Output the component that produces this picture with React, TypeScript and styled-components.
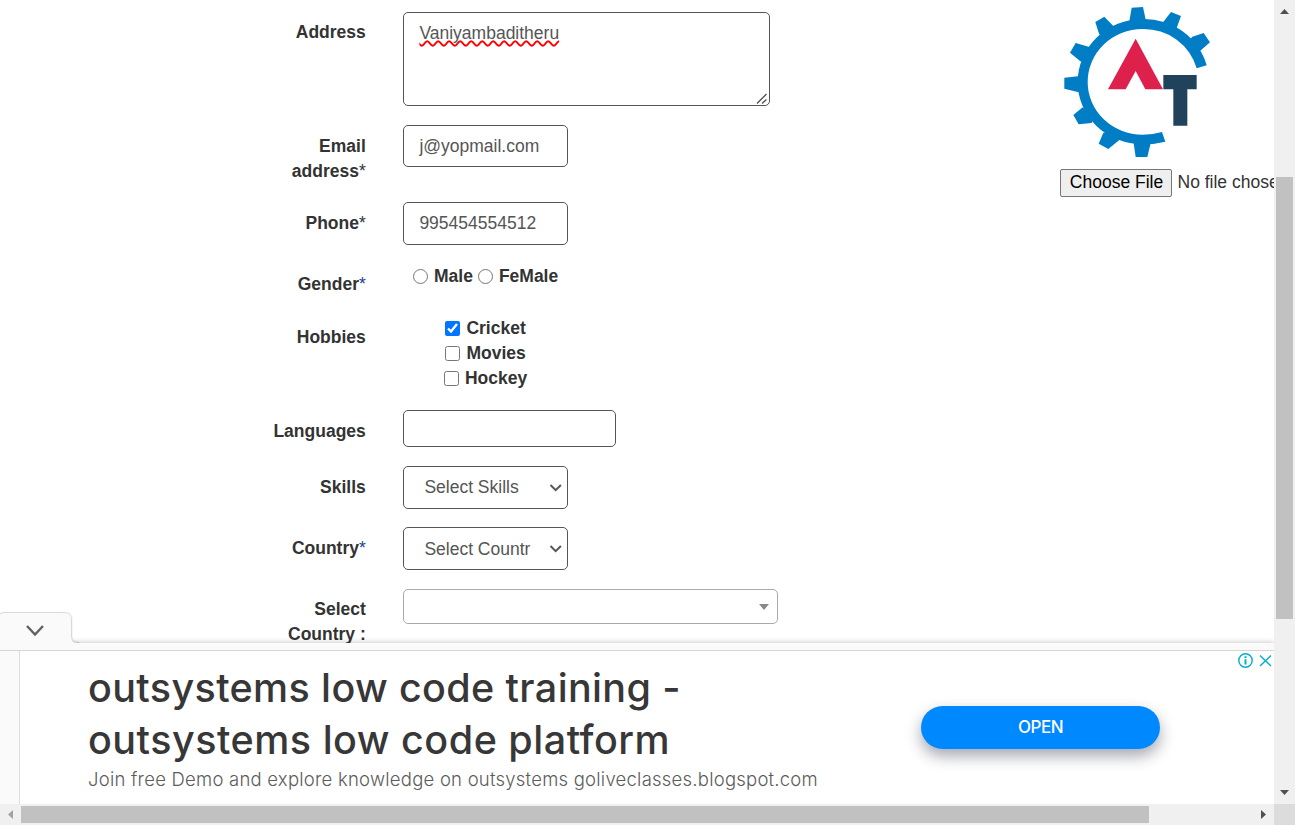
import React from "react";
import styled, { createGlobalStyle } from "styled-components";

const GlobalStyle = createGlobalStyle`
  *, *::before, *::after { box-sizing: border-box; }
  body {
    margin: 0;
    background: #fff;
    font-family: "Liberation Sans", Arial, sans-serif;
    font-size: 17.5px;
    line-height: 25px;
    color: #333;
    overflow: hidden;
  }
`;

const Window = styled.div`
  display: grid;
  grid-template-columns: 1274px 21px;
  grid-template-rows: 804px 21px;
  width: 1295px;
  height: 825px;
  overflow: hidden;
`;

const Viewport = styled.div`
  position: relative;
  display: flex;
  justify-content: space-between;
  overflow: hidden;
  background: #fff;
`;

const Form = styled.form`
  display: grid;
  grid-template-columns: 365.8px auto;
  grid-template-rows: 113px 77px 61px 53px 94px 56px 61px 62px 60px;
  column-gap: 37.2px;
  align-content: start;
  align-items: start;
  padding-top: 12px;
`;

const Label = styled.label<{ $top?: number }>`
  padding: ${(p) => p.$top ?? 9}px 0 0 254px;
  font-weight: bold;
  text-align: right;
`;

const Star = styled.span<{ $blue?: boolean }>`
  font-weight: normal;
  color: ${(p) => (p.$blue ? "#1d3f8f" : "#333")};
`;

const Field = styled.div<{ $w: number; $h: number; $light?: boolean; $indent?: number }>`
  display: flex;
  align-items: center;
  justify-content: space-between;
  width: ${(p) => p.$w}px;
  height: ${(p) => p.$h}px;
  padding: 0 5px 0 ${(p) => p.$indent ?? 15.4}px;
  border: 1px solid ${(p) => (p.$light ? "#aaa" : "#555")};
  border-radius: 5px;
  background: #fff;
  color: #555;
  white-space: nowrap;
`;

const TextArea = styled(Field)`
  align-items: flex-start;
  padding: 8px 1px 0 15.4px;
`;

const Misspelled = styled.span`
  text-decoration: underline wavy #f00 1.5px;
  text-decoration-skip-ink: none;
  text-underline-offset: 0.5px;
`;

const Grip = styled.svg`
  align-self: flex-end;
`;

const Clip = styled.span<{ $drop?: boolean }>`
  width: 107px;
  padding-top: ${(p) => (p.$drop ? 2 : 0)}px;
  overflow: hidden;
`;

const Caret = styled.svg`
  margin-right: 2px;
`;

const Radios = styled.div`
  display: flex;
  align-items: center;
  height: 27px;
  padding-left: 10px;
  font-weight: bold;
`;

const Checks = styled.div`
  display: flex;
  flex-direction: column;
  align-items: flex-start;
  padding-left: 41px;
  font-weight: bold;
`;

const Option = styled.label<{ $shift?: number }>`
  display: flex;
  align-items: center;
  height: 25px;
  margin-left: ${(p) => p.$shift ?? 0}px;
`;

const Toggle = styled.input<{ $gap: number }>`
  width: 15px;
  height: 15px;
  margin: 0 ${(p) => p.$gap}px 1px 0;
`;

const Aside = styled.aside`
  width: 214px;
  flex: none;
`;

const Logo = styled.svg`
  display: block;
`;

const FilePicker = styled.div`
  display: flex;
  align-items: center;
  gap: 5.5px;
  margin-top: 9px;
  white-space: nowrap;
`;

const FileButton = styled.button`
  width: 112px;
  height: 28px;
  flex: none;
  padding: 0 0 2px 1px;
  border: 1px solid #767676;
  border-radius: 2px;
  background: #efefef;
  color: #000;
  font: inherit;
`;

const FileName = styled.span`
  padding-bottom: 2px;
`;

const AdHost = styled.div`
  position: absolute;
  left: 0;
  right: 0;
  bottom: 0;
  height: 196px;
  overflow: hidden;
`;

const AdPanel = styled.section`
  position: absolute;
  left: 0;
  right: 0;
  bottom: 0;
  height: 161px;
  padding-top: 7px;
  background: #fafafa;
  box-shadow: 0 -1px 5px rgba(0, 0, 0, 0.2);
`;

const AdTab = styled.div`
  position: absolute;
  left: -8px;
  bottom: 154px;
`;

const TabShape = styled.svg`
  display: block;
`;

const AdBody = styled.div`
  display: flex;
  height: 154px;
  padding-left: 19px;
  border-top: 1px solid #d5d5d5;
`;

const AdCard = styled.div`
  position: relative;
  display: flex;
  flex: 1;
  justify-content: space-between;
  padding: 11px 114px 0 68px;
  border-left: 1px solid #ddd;
  background: #fff;
  font-family: Inter, sans-serif;
`;

const AdTitle = styled.h2`
  margin: 0;
  font-size: 39.5px;
  font-weight: 450;
  line-height: 52px;
  letter-spacing: 0.36px;
  color: #373737;
  white-space: nowrap;
`;

const AdTitleLine = styled.span<{ $spacing: number }>`
  display: block;
  letter-spacing: ${(p) => p.$spacing}px;
`;

const AdText = styled.p`
  margin: 1px 0 0;
  font-size: 18.5px;
  font-weight: 300;
  line-height: 25px;
  letter-spacing: 0.23px;
  color: #5c5c5c;
  white-space: nowrap;
`;

const OpenButton = styled.button`
  width: 239px;
  height: 43px;
  margin-top: 44px;
  border: 0;
  border-radius: 22px;
  background: #0088ff;
  box-shadow: 0 7px 15px rgba(30, 35, 60, 0.4);
  color: #fff;
  font: 500 17px/25px Inter, sans-serif;
  letter-spacing: -0.5px;
`;

const AdMarks = styled.svg`
  position: absolute;
  top: 1px;
  right: 1px;
`;

const VTrack = styled.div`
  display: flex;
  flex-direction: column;
  justify-content: space-between;
  align-items: center;
  background: #f0f0f0;
`;

const VThumb = styled.div`
  width: 17px;
  height: 442px;
  margin-top: 156px;
  background: #c1c1c1;
`;

const Spacer = styled.div`
  flex: 1;
`;

const HTrack = styled.div`
  display: flex;
  justify-content: space-between;
  align-items: center;
  background: #f0f0f0;
`;

const HThumb = styled.div`
  width: 1128px;
  height: 17px;
  margin-right: 104px;
  background: #c1c1c1;
`;

const Corner = styled.div`
  background: #dcdcdc;
`;

const TrackArrow = styled.svg`
  flex: none;
`;

const Chevron = () => (
  <svg width="13" height="9" viewBox="0 0 13 9">
    <path d="M1.5 2L6.7 7.2L11.9 2" fill="none" stroke="#555" strokeWidth="2" />
  </svg>
);

const ring =
  "M440 205L470 196A195 189 0 0 0 278 57A195 190 0 0 0 83 247A195 186 0 0 0 278 433Q315 433 346 425" +
  "L336 396Q310 404 278 404A165 158 0 0 1 113 246A165 159 0 0 1 278 87A165 159 0 0 1 440 205Z";

const teeth = [
  "245,23 279,21 288,64 278,75 237,70",
  "363,36 393,48 380,84 360,88 338,68",
  "461,99 480,127 451,152 430,160 410,130 427,110",
  "136,66 163,50 190,78 180,95 148,104",
  "77,129 60,158 93,185 110,180 118,141",
  "43,233 43,266 86,277 100,250 84,229",
  "70,345 86,373 125,369 130,350 98,322",
  "160,398 146,431 175,447 208,420 195,395",
  "251,430 257,471 292,471 302,430 275,420",
];

const Ad = () => (
  <AdHost>
    <AdPanel>
      <AdBody>
        <AdCard>
          <div>
            <AdTitle>
              <AdTitleLine $spacing={0.36}>outsystems low code training -</AdTitleLine>
              <AdTitleLine $spacing={0.5}>outsystems low code platform</AdTitleLine>
            </AdTitle>
            <AdText>Join free Demo and explore knowledge on outsystems goliveclasses.blogspot.com</AdText>
          </div>
          <OpenButton type="button">OPEN</OpenButton>
          <AdMarks width="36" height="17" viewBox="0 0 36 17">
            <g fill="none" stroke="#00aecd" strokeWidth="1.4">
              <circle cx="8.5" cy="8.5" r="6.7" />
              <path d="M23 3.5L34 14M34 3.5L23 14" />
              <path d="M8.5 7.3V12.5M8.5 4.2V6" strokeWidth="2" />
            </g>
          </AdMarks>
        </AdCard>
      </AdBody>
    </AdPanel>
    <AdTab>
      <TabShape width="87" height="38" viewBox="-8 0 87 38">
        <defs>
          <filter id="tabShadow" x="-20%" y="-20%" width="140%" height="140%">
            <feDropShadow dx="0" dy="0" stdDeviation="1.3" floodColor="#000" floodOpacity="0.45" />
          </filter>
        </defs>
        <path
          d="M-4 60V6Q0 1 5 1H64Q71 1 71 8V25Q71 31 78 31H100V60Z"
          fill="#fafafa"
          filter="url(#tabShadow)"
        />
        <path d="M27 14L35 22.5L43 14" fill="none" stroke="#616161" strokeWidth="2.4" />
      </TabShape>
    </AdTab>
  </AdHost>
);

export default function App() {
  return (
    <>
      <GlobalStyle />
      <Window>
        <Viewport>
          <Form>
            <Label $top={8}>Address</Label>
            <TextArea $w={367} $h={94}>
              <Misspelled>Vaniyambaditheru</Misspelled>
              <Grip width="12" height="12" viewBox="0 0 12 12">
                <path d="M1 10.5L10.5 1M6 10.5L10.5 6.5" stroke="#555" strokeWidth="1.4" />
              </Grip>
            </TextArea>

            <Label>Email address<Star>*</Star></Label>
            <Field $w={165} $h={42}>j@yopmail.com</Field>

            <Label>Phone<Star>*</Star></Label>
            <Field $w={165} $h={43}>995454554512</Field>

            <Label>Gender<Star $blue>*</Star></Label>
            <Radios>
              <Option><Toggle type="radio" $gap={6} />Male</Option>
              <Option $shift={5}><Toggle type="radio" $gap={6} />FeMale</Option>
            </Radios>

            <Label>Hobbies</Label>
            <Checks>
              <Option $shift={1}><Toggle type="checkbox" defaultChecked $gap={6.4} />Cricket</Option>
              <Option $shift={1}><Toggle type="checkbox" $gap={6.4} />Movies</Option>
              <Option><Toggle type="checkbox" $gap={6} />Hockey</Option>
            </Checks>

            <Label>Languages</Label>
            <Field $w={213} $h={37} />

            <Label>Skills</Label>
            <Field $w={165} $h={43} $indent={20.4}>
              <Clip>Select Skills</Clip>
              <Chevron />
            </Field>

            <Label>Country<Star $blue>*</Star></Label>
            <Field $w={165} $h={43} $indent={20.4}>
              <Clip $drop>Select Countr</Clip>
              <Chevron />
            </Field>

            <Label $top={8}>Select Country :</Label>
            <Field $w={375} $h={35} $light>
              <span />
              <Caret width="12" height="6" viewBox="0 0 12 6">
                <path d="M1 0H11L6 6Z" fill="#888" />
              </Caret>
            </Field>
          </Form>

          <Aside>
            <Logo width="155" height="160" viewBox="30 0 465 480">
              <g fill="#007dc5">
                <path d={ring} />
                {teeth.map((points) => <polygon key={points} points={points} />)}
              </g>
              <polygon points="257,116 339,268 286,268 257,213 227,268 174,268" fill="#dd204c" />
              <polygon points="340,225 440,225 440,268 412,268 412,377 370,377 370,268 340,268" fill="#20425b" />
            </Logo>
            <FilePicker>
              <FileButton type="button">Choose File</FileButton>
              <FileName>No file chosen</FileName>
            </FilePicker>
          </Aside>

          <Ad />
        </Viewport>

        <VTrack>
          <TrackArrow width="21" height="21" viewBox="0 0 21 21"><path d="M6 14L10.5 9L15 14Z" fill="#505050" /></TrackArrow>
          <VThumb />
          <Spacer />
          <TrackArrow width="21" height="21" viewBox="0 0 21 21"><path d="M6 7L10.5 12L15 7Z" fill="#505050" /></TrackArrow>
        </VTrack>

        <HTrack>
          <TrackArrow width="21" height="21" viewBox="0 0 21 21"><path d="M13 6V15L8 10.5Z" fill="#a3a3a3" /></TrackArrow>
          <HThumb />
          <TrackArrow width="21" height="21" viewBox="0 0 21 21"><path d="M8 6V15L13 10.5Z" fill="#505050" /></TrackArrow>
        </HTrack>
        <Corner />
      </Window>
    </>
  );
}
